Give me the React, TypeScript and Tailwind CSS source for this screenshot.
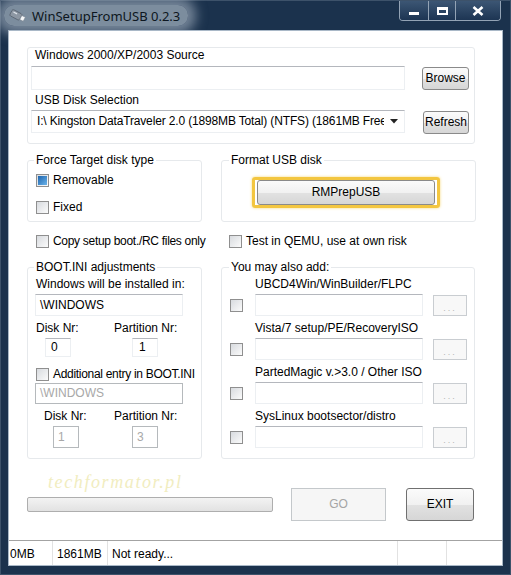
import React from 'react';

function Check({ on = false }: { on?: boolean }) {
  return (
    <span className="flex h-[13px] w-[13px] shrink-0 items-center justify-center border border-[#8f8f8f] bg-gradient-to-br from-[#d8dbdf] to-[#fbfbfb]">
      {on && <span className="h-[9px] w-[9px] bg-gradient-to-br from-[#1c64ad] to-[#6ab4ea]" />}
    </span>
  );
}

function TextBox({ className = '', value = '', disabled = false }: { className?: string; value?: string; disabled?: boolean }) {
  return (
    <div
      className={`flex shrink-0 items-center border px-[4px] ${
        disabled ? 'border-[#b5b9bc] text-[#a8a8a8]' : 'border-[#eceff2] border-t-[#b4b7bd] text-black'
      } ${className}`}
    >
      {value}
    </div>
  );
}

function Btn({ children, className = '' }: { children: React.ReactNode; className?: string }) {
  return (
    <div
      className={`flex shrink-0 items-center justify-center rounded-[3px] border border-[#8a8a8a] bg-[linear-gradient(#fbfbfb_0%,#f1f1f1_50%,#e2e2e2_51%,#d6d6d6_100%)] ${className}`}
    >
      {children}
    </div>
  );
}

function Dots() {
  return (
    <div className="ml-[10px] flex h-[21px] w-[34px] shrink-0 items-end justify-center border border-[#c9cdd1] bg-[#f8f8f8] pb-[2px] text-[9px] leading-[9px] tracking-[2px] text-[#b4b4b4]">
      ...
    </div>
  );
}

function UsbIcon() {
  return (
    <svg width="17" height="14" viewBox="0 0 17 14">
      <g transform="rotate(28 8 7)">
        <rect x="1" y="3" width="11" height="7" rx="1.5" fill="#8d97a3" stroke="#5a6470" strokeWidth="0.8" />
        <rect x="12" y="4.2" width="4" height="4.6" fill="#f4f6f8" stroke="#7c8793" strokeWidth="0.6" />
        <rect x="3" y="4.5" width="4" height="1.2" fill="#dfe4ea" />
      </g>
    </svg>
  );
}

const addons = [
  'UBCD4Win/WinBuilder/FLPC',
  'Vista/7 setup/PE/RecoveryISO',
  'PartedMagic v.>3.0 / Other ISO',
  'SysLinux bootsector/distro',
];

export default function App() {
  return (
    <div className="flex h-[575px] w-[511px] flex-col border border-[#3d526a] bg-[#1b324d] font-['Liberation_Sans',Arial,sans-serif] text-[12px] leading-[15px] text-black">
      {/* title bar */}
      <div className="flex h-[29px] shrink-0 items-start justify-between">
        <div className="ml-[3px] mt-[4px] flex h-[21px] items-center gap-[6px] rounded-[10px] bg-[rgba(190,201,213,0.6)] pl-[5px] pr-[8px] shadow-[0_0_12px_8px_rgba(190,201,213,0.55)]">
          <UsbIcon />
          <span className="whitespace-nowrap font-['Noto_Sans',sans-serif] text-[13px] leading-[18px] text-[#0d1620]">
            WinSetupFromUSB 0.2.3
          </span>
        </div>
        <div className="mr-[9px] flex h-[20px] overflow-hidden rounded-b-[4px] border border-t-0 border-[#93a3b5]">
          <div className="flex w-[28px] items-end justify-center bg-gradient-to-b from-[#3c5674] to-[#1d3553] pb-[5px]">
            <span className="h-[3px] w-[10px] bg-white" />
          </div>
          <div className="flex w-[27px] items-center justify-center border-l border-[#93a3b5] bg-gradient-to-b from-[#3c5674] to-[#1d3553]">
            <span className="h-[8px] w-[11px] border-2 border-t-[3px] border-white" />
          </div>
          <div className="flex w-[45px] items-center justify-center border-l border-[#93a3b5] bg-gradient-to-b from-[#3c5674] to-[#1d3553]">
            <svg width="12" height="10" viewBox="0 0 12 10">
              <path d="M1.5 1 L10.5 9 M10.5 1 L1.5 9" stroke="white" strokeWidth="2.6" />
            </svg>
          </div>
        </div>
      </div>

      {/* client area */}
      <div className="mx-[7px] flex h-[536px] flex-col border border-[#a9b8c7] bg-white">
        <div className="flex flex-1 flex-col whitespace-nowrap pl-[18px]">
          {/* source / usb disk */}
          <div className="mt-[16px] flex h-[97px] w-[448px] flex-col rounded-[3px] border border-[#e6e9ec] pl-[3px]">
            <div className="pl-[4px]">Windows 2000/XP/2003 Source</div>
            <div className="mt-[3px] flex items-start">
              <TextBox className="h-[24px] w-[374px]" />
              <Btn className="ml-[17px] mt-[1px] h-[23px] w-[47px] border-[#3c7fb1] bg-[linear-gradient(#f4fafe_0%,#e9f5fd_50%,#d9eefb_51%,#c6e5f9_100%)]">Browse</Btn>
            </div>
            <div className="mt-[3px] pl-[4px]">USB Disk Selection</div>
            <div className="mt-[2px] flex items-start">
              <div className="flex h-[23px] w-[374px] shrink-0 items-center border border-[#eceff2] border-t-[#b4b7bd] pl-[5px]">
                <span className="flex-1 overflow-hidden tracking-[-0.15px]">
                  I:\ Kingston DataTraveler 2.0 (1898MB Total) (NTFS) (1861MB Free)
                </span>
                <span className="flex w-[20px] justify-center">
                  <svg width="8" height="5" viewBox="0 0 8 5">
                    <path d="M0 0 H8 L4 4.5 Z" fill="#222" />
                  </svg>
                </span>
              </div>
              <Btn className="ml-[18px] mt-[1px] h-[23px] w-[46px]">Refresh</Btn>
            </div>
          </div>

          {/* disk type / format */}
          <div className="mt-[9px] flex gap-[19px]">
            <fieldset className="w-[175px] rounded-[3px] border border-[#e6e9ec]">
              <legend className="ml-[6px] px-[2px]">Force Target disk type</legend>
              <div className="flex flex-col pb-[6px] pl-[8px] pt-[5px]">
                <div className="flex h-[15px] items-center gap-[4px]">
                  <Check on />
                  <span>Removable</span>
                </div>
                <div className="mt-[12px] flex h-[15px] items-center gap-[4px]">
                  <Check />
                  <span>Fixed</span>
                </div>
              </div>
            </fieldset>
            <fieldset className="w-[255px] rounded-[3px] border border-[#e6e9ec]">
              <legend className="ml-[7px] px-[2px]">Format USB disk</legend>
              <div className="pb-[13px] pl-[30px] pt-[9px]">
                <div className="flex h-[31px] w-[188px] items-center rounded-[3px] border-[3px] border-[#f3c640] px-[2px] shadow-[0_0_3px_#f7d878]">
                  <Btn className="h-[25px] w-full border-[#6f6f6f]">RMPrepUSB</Btn>
                </div>
              </div>
            </fieldset>
          </div>

          {/* option checkboxes */}
          <div className="mt-[12px] flex h-[15px]">
            <div className="flex w-[175px] items-center gap-[4px] pl-[9px]">
              <Check />
              <span className="tracking-[-0.3px]">Copy setup boot./RC files only</span>
            </div>
            <div className="ml-[19px] flex items-center gap-[4px] pl-[8px]">
              <Check />
              <span>Test in QEMU, use at own risk</span>
            </div>
          </div>

          {/* boot.ini / addons */}
          <div className="mt-[11px] flex items-start gap-[19px]">
            <fieldset className="w-[175px] rounded-[3px] border border-[#e6e9ec]">
              <legend className="ml-[6px] px-[2px]">BOOT.INI adjustments</legend>
              <div className="flex flex-col pb-[10px]">
                <div className="ml-[8px] mt-[2px]">Windows will be installed in:</div>
                <TextBox className="ml-[7px] mt-[2px] h-[22px] w-[148px]" value="\WINDOWS" />
                <div className="mt-[5px] flex h-[15px] pl-[8px]">
                  <span className="w-[78px]">Disk Nr:</span>
                  <span>Partition Nr:</span>
                </div>
                <div className="mt-[2px] flex">
                  <TextBox className="ml-[17px] h-[19px] w-[26px] pl-[5px]" value="0" />
                  <TextBox className="ml-[61px] h-[19px] w-[26px] pl-[6px]" value="1" />
                </div>
                <div className="ml-[8px] mt-[10px] flex h-[15px] items-center gap-[4px]">
                  <Check />
                  <span className="tracking-[-0.3px]">Additional entry in BOOT.INI</span>
                </div>
                <TextBox className="ml-[7px] mt-[1px] h-[21px] w-[148px]" value="\WINDOWS" disabled />
                <div className="mt-[5px] flex h-[15px] pl-[16px]">
                  <span className="w-[70px]">Disk Nr:</span>
                  <span>Partition Nr:</span>
                </div>
                <div className="mt-[2px] flex">
                  <TextBox className="ml-[25px] h-[22px] w-[26px]" value="1" disabled />
                  <TextBox className="ml-[53px] h-[22px] w-[26px]" value="3" disabled />
                </div>
              </div>
            </fieldset>
            <fieldset className="w-[254px] rounded-[3px] border border-[#e6e9ec]">
              <legend className="ml-[7px] px-[2px]">You may also add:</legend>
              <div className="flex flex-col pb-[10px]">
                {addons.map((name, i) => (
                  <div key={name} className={`flex flex-col ${i === 0 ? 'mt-[2px]' : 'mt-[5px]'}`}>
                    <div className="pl-[33px]">{name}</div>
                    <div className="mt-[2px] flex items-center">
                      <span className="ml-[8px]">
                        <Check />
                      </span>
                      <TextBox className="ml-[12px] h-[22px] w-[168px]" />
                      <Dots />
                    </div>
                  </div>
                ))}
              </div>
            </fieldset>
          </div>

          {/* progress / actions */}
          <div className="mt-[13px] flex items-start">
            <div className="flex w-[246px] flex-col">
              <div className="h-[20px] pl-[21px] font-['Liberation_Serif',serif] text-[18px] italic leading-[20px] tracking-[1.6px] text-[#f1edc0]">
                techformator.pl
              </div>
              <div className="mt-[5px] h-[15px] rounded-[2px] border border-[#aeaeae] bg-gradient-to-b from-[#f3f3f3] to-[#e2e2e2]" />
            </div>
            <div className="ml-[18px] mt-[16px] flex h-[33px] w-[95px] items-center justify-center border border-[#c4c8cb] bg-[#f6f6f6] text-[#a5a5a5]">
              GO
            </div>
            <Btn className="ml-[20px] mt-[16px] h-[33px] w-[68px] border-[#707070]">EXIT</Btn>
          </div>
        </div>

        {/* status bar */}
        <div className="flex h-[25px] shrink-0 whitespace-nowrap border-t border-[#a3a3a3]">
          <div className="w-[44px] border-r border-[#e2e2e2] pl-[1px] pt-[6px]">0MB</div>
          <div className="w-[55px] border-r border-[#e2e2e2] pl-[4px] pt-[6px]">1861MB</div>
          <div className="w-[290px] border-r border-[#e2e2e2] pl-[4px] pt-[6px]">Not ready...</div>
          <div className="w-[49px] border-r border-[#e2e2e2]" />
          <div className="flex-1" />
        </div>
      </div>
    </div>
  );
}
